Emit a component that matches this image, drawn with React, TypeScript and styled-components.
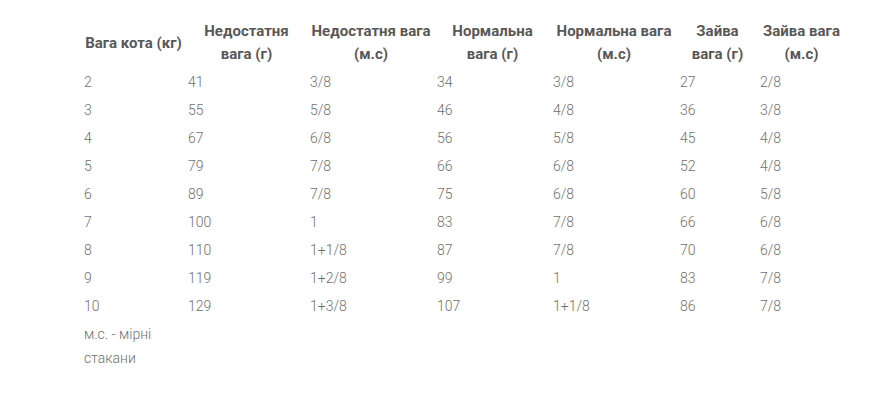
import React from "react";
import styled, { createGlobalStyle } from "styled-components";

const GlobalStyle = createGlobalStyle`
  html, body {
    margin: 0;
    padding: 0;
    background: #ffffff;
  }
`;

const Page = styled.div`
  padding: 14px 0 0 84px;
  font-family: Roboto, "Liberation Sans", sans-serif;
`;

const Table = styled.table`
  border-collapse: collapse;
  table-layout: fixed;
  width: 764px;
`;

const Col = styled.col<{ $w: number }>`
  width: ${(p) => p.$w}px;
`;

const HeadCell = styled.th`
  padding: 6px 5px 2px 0;
  font-size: 15px;
  font-weight: 700;
  line-height: 23px;
  color: #585858;
  text-align: center;
  vertical-align: middle;
  white-space: nowrap;
`;

const Cell = styled.td`
  padding: 2px 5px 2px 0;
  font-size: 14px;
  font-weight: 300;
  line-height: 24px;
  color: #6f6f6f;
  text-align: left;
  vertical-align: middle;
  white-space: nowrap;
`;

const widths = [104, 122, 127, 116, 127, 80, 88];

const headers: string[][] = [
  ["Вага кота (кг)"],
  ["Недостатня", "вага (г)"],
  ["Недостатня вага", "(м.с)"],
  ["Нормальна", "вага (г)"],
  ["Нормальна вага", "(м.с)"],
  ["Зайва", "вага (г)"],
  ["Зайва вага", "(м.с)"],
];

const rows: string[][] = [
  ["2", "41", "3/8", "34", "3/8", "27", "2/8"],
  ["3", "55", "5/8", "46", "4/8", "36", "3/8"],
  ["4", "67", "6/8", "56", "5/8", "45", "4/8"],
  ["5", "79", "7/8", "66", "6/8", "52", "4/8"],
  ["6", "89", "7/8", "75", "6/8", "60", "5/8"],
  ["7", "100", "1", "83", "7/8", "66", "6/8"],
  ["8", "110", "1+1/8", "87", "7/8", "70", "6/8"],
  ["9", "119", "1+2/8", "99", "1", "83", "7/8"],
  ["10", "129", "1+3/8", "107", "1+1/8", "86", "7/8"],
];

const App = () => {
  return (
    <>
      <GlobalStyle />
      <Page>
        <Table>
          <colgroup>
            {widths.map((w, i) => (
              <Col key={i} $w={w} />
            ))}
          </colgroup>
          <thead>
            <tr>
              {headers.map((h, i) => (
                <HeadCell key={i}>
                  {h.map((line, j) => (
                    <React.Fragment key={j}>
                      {j > 0 && <br />}
                      {line}
                    </React.Fragment>
                  ))}
                </HeadCell>
              ))}
            </tr>
          </thead>
          <tbody>
            {rows.map((r, i) => (
              <tr key={i}>
                {r.map((v, j) => (
                  <Cell key={j}>{v}</Cell>
                ))}
              </tr>
            ))}
            <tr>
              <Cell>
                м.с. - мірні
                <br />
                стакани
              </Cell>
              <Cell />
              <Cell />
              <Cell />
              <Cell />
              <Cell />
              <Cell />
            </tr>
          </tbody>
        </Table>
      </Page>
    </>
  );
};

export default App;
